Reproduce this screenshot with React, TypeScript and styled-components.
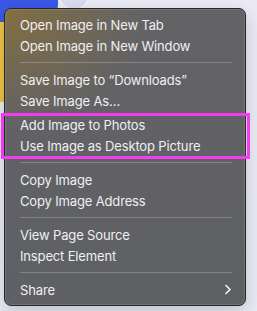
import { createGlobalStyle } from 'styled-components';
import styled from 'styled-components';

const GlobalStyle = createGlobalStyle`
  html, body {
    margin: 0;
    padding: 0;
    background: #ebebf6;
  }
  body {
    font-family: Inter, "Noto Sans", "Liberation Sans", sans-serif;
    -webkit-font-smoothing: antialiased;
  }
`;

const Page = styled.div`
  position: relative;
  width: 257px;
  height: 311px;
  overflow: hidden;
  padding: 8px 0 0 4px;
  box-sizing: border-box;
`;

// artwork of the page under the menu
const BlueShape = styled.div`
  position: absolute;
  left: 0;
  top: -40px;
  width: 58px;
  height: 62px;
  background: #3b57e6;
  border-bottom-right-radius: 18px;
`;

const YellowShape = styled.div`
  position: absolute;
  left: -40px;
  top: 20px;
  width: 90px;
  height: 82px;
  background: #f2c447;
  border-radius: 0 0 30px 0;
`;

const Ring = styled.div`
  position: absolute;
  left: 58px;
  top: -22px;
  width: 30px;
  height: 30px;
  border-radius: 50%;
  border: 1px solid #ffffff;
  background: #dcdcf0;
`;

const Menu = styled.div`
  position: relative;
  width: 242px;
  box-sizing: border-box;
  padding: 5px 0;
  border-radius: 7px;
  background:
    radial-gradient(ellipse 140px 120px at 0 0, rgba(150, 118, 40, 0.6), rgba(150, 118, 40, 0) 100%),
    linear-gradient(180deg, #636366 0%, #5f6064 100%);
  border: 1px solid #262628;
  box-shadow: inset 0 0 0 1px rgba(255, 255, 255, 0.12), 0 6px 18px rgba(0, 0, 0, 0.18);
  color: #efeff1;
  font-size: 13px;
`;

const Group = styled.div<{ $gap?: number }>`
  position: relative;
  margin-top: ${(p) => p.$gap ?? 0}px;
`;

const Item = styled.div`
  display: flex;
  align-items: center;
  justify-content: space-between;
  height: 21px;
  padding: 0 13px 0 15px;
  white-space: nowrap;
  letter-spacing: -0.15px;
`;

const Separator = styled.div`
  padding: 6px 13px 6px 15px;

  &::after {
    content: '';
    display: block;
    height: 1px;
    background: rgba(255, 255, 255, 0.22);
  }
`;

const Highlight = styled.div`
  position: absolute;
  left: -4px;
  right: -5px;
  top: -1px;
  bottom: -3px;
  border: 3px solid #f23cf2;
  pointer-events: none;
`;

const Chevron = () => (
  <svg width="8" height="11" viewBox="0 0 8 11" fill="none">
    <polyline points="2,1.5 6,5.5 2,9.5" stroke="#efeff1" strokeWidth="1.7" strokeLinecap="round" strokeLinejoin="round" />
  </svg>
);

export default function App() {
  return (
    <>
      <GlobalStyle />
      <Page>
        <YellowShape />
        <BlueShape />
        <Ring />
        <Menu>
          <Item>Open Image in New Tab</Item>
          <Item>Open Image in New Window</Item>
          <Separator />
          <Item>Save Image to “Downloads”</Item>
          <Item>Save Image As…</Item>
          <Group $gap={3}>
            <Item>Add Image to Photos</Item>
            <Item>Use Image as Desktop Picture</Item>
            <Highlight />
          </Group>
          <Separator />
          <Item>Copy Image</Item>
          <Item>Copy Image Address</Item>
          <Separator />
          <Item>View Page Source</Item>
          <Item>Inspect Element</Item>
          <Separator />
          <Item>
            Share
            <Chevron />
          </Item>
        </Menu>
      </Page>
    </>
  );
}
